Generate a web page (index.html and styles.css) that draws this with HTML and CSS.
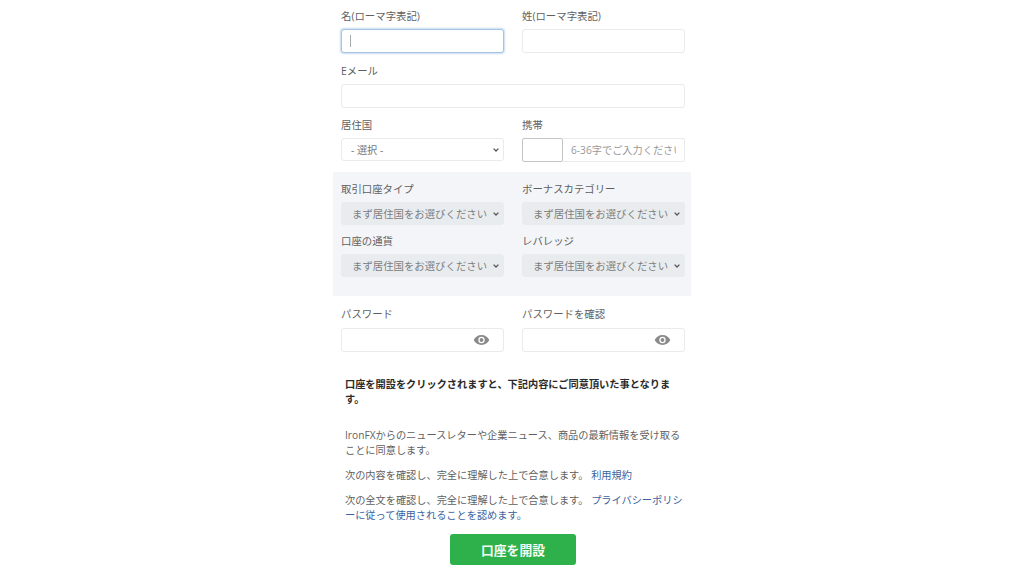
FILE: index.html
```html
<!DOCTYPE html>
<html lang="ja">
<head>
    <meta charset="UTF-8">
    <meta name="viewport" content="width=device-width, initial-scale=1.0">
    <title>口座を開設</title>
    <link rel="stylesheet" href="styles.css">
</head>
<body>
    <form class="signup">
        <div class="row">
            <div class="field">
                <label for="first-name">名(ローマ字表記)</label>
                <div class="text-box focused"><span class="caret"></span></div>
            </div>
            <div class="field">
                <label for="last-name">姓(ローマ字表記)</label>
                <input class="text-box" type="text" id="last-name">
            </div>
        </div>

        <div class="field email-field">
            <label for="email">Eメール</label>
            <input class="text-box" type="email" id="email">
        </div>

        <div class="row country-row">
            <div class="field">
                <label for="country">居住国</label>
                <select class="select-box" id="country">
                    <option>- 選択 -</option>
                </select>
            </div>
            <div class="field">
                <label for="phone">携帯</label>
                <div class="phone-group">
                    <span class="phone-prefix"></span>
                    <input class="phone-input" type="text" id="phone" placeholder="6-36字でご入力ください">
                </div>
            </div>
        </div>

        <div class="account-panel">
            <div class="row">
                <div class="field">
                    <label>取引口座タイプ</label>
                    <select class="select-box disabled" disabled><option>まず居住国をお選びください</option></select>
                </div>
                <div class="field">
                    <label>ボーナスカテゴリー</label>
                    <select class="select-box disabled" disabled><option>まず居住国をお選びください</option></select>
                </div>
            </div>
            <div class="row second">
                <div class="field">
                    <label>口座の通貨</label>
                    <select class="select-box disabled" disabled><option>まず居住国をお選びください</option></select>
                </div>
                <div class="field">
                    <label>レバレッジ</label>
                    <select class="select-box disabled" disabled><option>まず居住国をお選びください</option></select>
                </div>
            </div>
        </div>

        <div class="row password-row">
            <div class="field">
                <label for="password">パスワード</label>
                <div class="text-box password-box">
                    <svg class="eye" viewBox="0 0 24 16"><path d="M12 1C7 1 2.800 3.900 1 8c1.800 4.100 6 7 11 7s9.200-2.900 11-7c-1.800-4.100-6-7-11-7zm0 11.500A4.500 4.500 0 1 1 12 3.500a4.500 4.500 0 0 1 0 9zM12 5.300a2.700 2.700 0 1 0 0 5.400 2.700 2.700 0 0 0 0-5.400z"/></svg>
                </div>
            </div>
            <div class="field">
                <label for="password2">パスワードを確認</label>
                <div class="text-box password-box">
                    <svg class="eye" viewBox="0 0 24 16"><path d="M12 1C7 1 2.800 3.900 1 8c1.800 4.100 6 7 11 7s9.200-2.900 11-7c-1.800-4.100-6-7-11-7zm0 11.500A4.500 4.500 0 1 1 12 3.500a4.500 4.500 0 0 1 0 9zM12 5.300a2.700 2.700 0 1 0 0 5.400 2.700 2.700 0 0 0 0-5.400z"/></svg>
                </div>
            </div>
        </div>

        <div class="terms">
            <p class="notice">口座を開設をクリックされますと、下記内容にご同意頂いた事となります。</p>
            <p class="first">IronFXからのニュースレターや企業ニュース、商品の最新情報を受け取ることに同意します。</p>
            <p>次の内容を確認し、完全に理解した上で合意します。 <a href="#">利用規約</a></p>
            <p>次の全文を確認し、完全に理解した上で合意します。 <a href="#">プライバシーポリシーに従って使用されることを認めます。</a></p>
        </div>

        <button class="submit" type="button">口座を開設</button>
    </form>
</body>
</html>
```

FILE: styles.css
```css
* {
    box-sizing: border-box;
}

body {
    margin: 0;
    height: 576px;
    overflow: hidden;
    background-color: #fff;
    font-family: "Open Sans", "Noto Sans CJK JP", sans-serif;
    font-size: 10.2px;
    color: #5f5f5f;
    display: flex;
    justify-content: center;
}

.signup {
    width: 358px;
    padding: 9px 6px 0 8px;
    display: flex;
    flex-direction: column;
}

.row {
    display: grid;
    grid-template-columns: 163px 163px;
    column-gap: 18px;
}

.field label {
    display: block;
    height: 20px;
    line-height: 14px;
    font-size: 10.4px;
}

.text-box {
    display: block;
    width: 100%;
    height: 24px;
    border: 1px solid #e8eaec;
    border-radius: 3px;
    background-color: #fff;
    padding: 0 8px;
}

.text-box.focused {
    border: 1px solid #a4c4e2;
    box-shadow: 0 0 2px 1px #c8dcef;
    display: flex;
    align-items: center;
}

.caret {
    width: 1px;
    height: 12px;
    background-color: #aaa;
}

.email-field {
    margin-top: 11px;
}

.country-row {
    margin-top: 10px;
}

.select-box {
    display: block;
    width: 100%;
    height: 23px;
    border: 1px solid #e8eaec;
    border-radius: 3px;
    background: #fff url("data:image/svg+xml,%3Csvg xmlns='http://www.w3.org/2000/svg' width='6' height='4'%3E%3Cpath d='M.6.6 3 3l2.400-2.400' fill='none' stroke='%23555' stroke-width='1.300'/%3E%3C/svg%3E") no-repeat right 4px center;
    appearance: none;
    color: #777;
    font: inherit;
    padding: 0 14px 0 9px;
}

.select-box.disabled {
    border-color: #e9ecef;
    background-color: #e9ecef;
    color: #7d7d7d;
    opacity: 1;
    font-size: 10.400px;
    padding: 0 12px 0 10px;
}

.phone-group {
    display: flex;
    height: 24px;
}

.phone-prefix {
    width: 41px;
    border: 1px solid #c4c4c4;
    border-radius: 2px;
    background-color: #fff;
}

.phone-input {
    flex: 1;
    min-width: 0;
    border: 1px solid #e8eaec;
    border-left: none;
    border-radius: 0 3px 3px 0;
    padding: 0 8px;
    font: inherit;
}

.phone-input::placeholder {
    color: #999;
    opacity: 1;
}

.account-panel {
    margin: 10px 0 0 -8px;
    width: 358px;
    height: 124px;
    padding: 10px 6px 0 8px;
    background-color: #f3f5f8;
}

.account-panel .row.second {
    margin-top: 9px;
}

.password-row {
    margin-top: 11px;
}

.password-row .field label {
    height: 21px;
}

.password-box {
    display: flex;
    align-items: center;
    justify-content: flex-end;
    padding-right: 13px;
}

.eye {
    width: 17px;
    height: 12px;
    fill: #8a8a8a;
    fill-rule: evenodd;
}

.terms {
    margin-top: 25px;
    padding-left: 4px;
    line-height: 15px;
}

.terms p {
    margin: 0 0 10px;
}

.terms .notice {
    font-weight: 700;
    color: #2a2a2a;
    margin-bottom: 21px;
}

a {
    color: #3a62a0;
    text-decoration: none;
}

.submit {
    display: block;
    align-self: center;
    width: 126px;
    height: 31px;
    margin-top: 0.500px;
    border: none;
    border-radius: 3px;
    background-color: #2eb14a;
    color: #f4fbf5;
    font: inherit;
    font-size: 12.800px;
    font-weight: 700;
}
```
